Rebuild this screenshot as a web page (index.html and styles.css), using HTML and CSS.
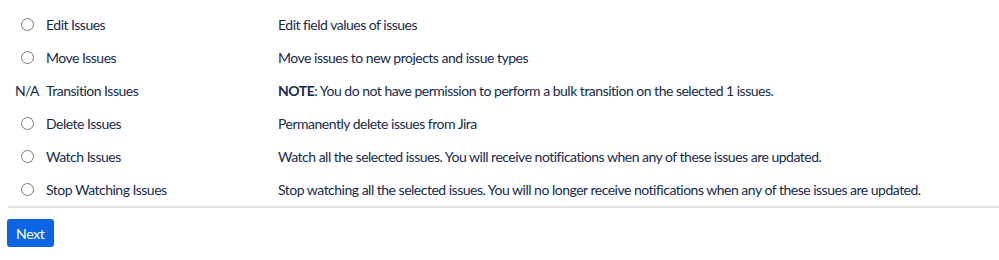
FILE: index.html
```html
<!DOCTYPE html>
<html>
<head>
<meta charset="utf-8">
<link rel="stylesheet" href="styles.css">
</head>
<body>
<div class="ops">
  <div class="row">
    <div class="sel"><span class="radio"></span></div>
    <div class="name">Edit Issues</div>
    <div class="desc">Edit field values of issues</div>
  </div>
  <div class="row">
    <div class="sel"><span class="radio"></span></div>
    <div class="name">Move Issues</div>
    <div class="desc">Move issues to new projects and issue types</div>
  </div>
  <div class="row">
    <div class="sel">N/A</div>
    <div class="name">Transition Issues</div>
    <div class="desc"><b>NOTE</b>: You do not have permission to perform a bulk transition on the selected 1 issues.</div>
  </div>
  <div class="row">
    <div class="sel"><span class="radio"></span></div>
    <div class="name">Delete Issues</div>
    <div class="desc">Permanently delete issues from Jira</div>
  </div>
  <div class="row">
    <div class="sel"><span class="radio"></span></div>
    <div class="name">Watch Issues</div>
    <div class="desc">Watch all the selected issues. You will receive notifications when any of these issues are updated.</div>
  </div>
  <div class="row">
    <div class="sel"><span class="radio"></span></div>
    <div class="name">Stop Watching Issues</div>
    <div class="desc">Stop watching all the selected issues. You will no longer receive notifications when any of these issues are updated.</div>
  </div>
</div>
<div class="actions">
  <button class="btn">Next</button>
</div>
</body>
</html>
```
FILE: styles.css
```css
html, body {
  margin: 0;
  padding: 0;
  background: #ffffff;
}
body {
  padding: 8px 0 0 8px;
  font-family: Lato, "Liberation Sans", Arial, sans-serif;
  font-size: 14px;
  letter-spacing: -0.5px;
  color: #172b4d;
}
.ops {
  border-bottom: 2px solid #dfe1e6;
}
.row {
  display: grid;
  grid-template-columns: 38px 232px 1fr;
  height: 33px;
  align-items: center;
}
.sel {
  display: flex;
  justify-content: center;
  align-items: center;
}
.radio {
  display: block;
  width: 11px;
  height: 11px;
  border: 1px solid #7a7a7a;
  border-radius: 50%;
  box-sizing: content-box;
}
.desc b {
  font-weight: 700;
}
.actions {
  padding-top: 11px;
}
.btn {
  margin-left: -1px;
  height: 28px;
  padding: 0 9px;
  border: none;
  border-radius: 3px;
  background: #0c66e4;
  color: #ffffff;
  font-family: Lato, "Liberation Sans", Arial, sans-serif;
  font-size: 14px;
  letter-spacing: -0.3px;
}
```
